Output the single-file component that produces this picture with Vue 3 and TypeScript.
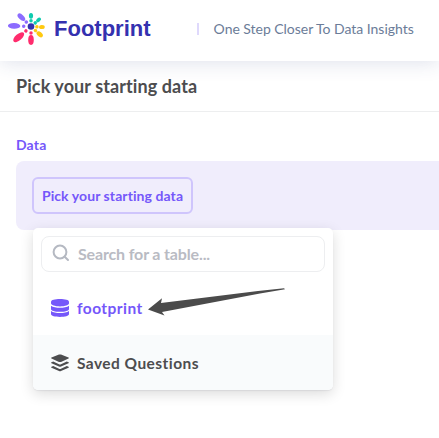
<script setup lang="ts">
interface Petal {
  angle: number
  color: string
  near: number
  far: number
  length: number
  width: number
}

interface Source {
  id: string
  label: string
  icon: 'database' | 'stack'
}

const petals: Petal[] = [
  { angle: -90, color: '#0fcbae', near: 5.8, far: 10.7, length: 2.9, width: 2.1 },
  { angle: -41, color: '#0fcbae', near: 5.6, far: 10, length: 2.8, width: 1.9 },
  { angle: 3, color: '#ffc910', near: 5.9, far: 10.9, length: 2.9, width: 2 },
  { angle: 42, color: '#ffc910', near: 6, far: 11.7, length: 3.7, width: 2.3 },
  { angle: 90, color: '#ff2c6d', near: 6.5, far: 13.5, length: 4.9, width: 2.8 },
  { angle: 139, color: '#ff2c6d', near: 6.8, far: 16.3, length: 6.7, width: 3.2 },
  { angle: 182, color: '#8c6cff', near: 7.3, far: 16.9, length: 6.2, width: 2.9 },
  { angle: 224, color: '#8c6cff', near: 6.5, far: 13.4, length: 4.7, width: 2.5 },
]

const sources: Source[] = [
  { id: 'footprint', label: 'footprint', icon: 'database' },
  { id: 'saved', label: 'Saved Questions', icon: 'stack' },
]
</script>

<template>
  <div class="page">
    <header class="header">
      <svg class="logo" viewBox="0 0 40 36" aria-hidden="true">
        <g transform="translate(23 15.500)">
          <circle r="3.300" fill="#3332ae" />
          <g v-for="p in petals" :key="p.angle" :fill="p.color" :transform="`rotate(${p.angle})`">
            <circle :cx="p.near" r="1.750" />
            <ellipse :cx="p.far" :rx="p.length" :ry="p.width" />
          </g>
        </g>
      </svg>
      <span class="brand">Footprint</span>
      <span class="divider"></span>
      <span class="tagline">One Step Closer To Data Insights</span>
    </header>
    <div class="heading"><h1>Pick your starting data</h1></div>
    <main class="content">
      <h2 class="label">Data</h2>
      <section class="step">
        <div class="picker">
          <button class="trigger" type="button">Pick your starting data</button>
          <div class="menu">
            <label class="search">
              <svg class="search-icon" viewBox="0 0 18 18" aria-hidden="true">
                <circle cx="8" cy="8" r="6.400" />
                <path d="m12.700 12.700 3.300 3.300" />
              </svg>
              <input type="text" placeholder="Search for a table..." />
            </label>
            <ul class="sources">
              <li v-for="s in sources" :key="s.id" class="source" :class="s.id">
                <svg v-if="s.icon === 'database'" class="icon" viewBox="0 0 18 18" aria-hidden="true">
                  <path d="M0 2.800C0 1 4 0 9 0s9 1 9 2.800v1.500C18 6.200 14 7.400 9 7.400S0 6.200 0 4.300Z" />
                  <path d="M0 6.700c2 1.500 5.300 2 9 2s7-.5 9-2v3.200c0 1.800-4 2.900-9 2.900S0 11.700 0 9.900Z" />
                  <path d="M0 12.100c2 1.500 5.300 2 9 2s7-.5 9-2v3c0 1.800-4 2.900-9 2.900s-9-1.100-9-2.900Z" />
                </svg>
                <svg v-else class="icon" viewBox="0 0 18 18" aria-hidden="true">
                  <path d="M8 .600Q9 .200 10 .600L17.500 3.600Q18.300 4 17.500 4.500L10 7.900Q9 8.300 8 7.900L.500 4.500Q-.300 4 .500 3.600Z" />
                  <path d="M.500 8.300 2.200 7.500 8 10.200Q9 10.600 10 10.200L15.800 7.500 17.500 8.300Q18.300 8.700 17.500 9.200L10 12.500Q9 12.900 8 12.500L.500 9.200Q-.300 8.700 .500 8.300Z" />
                  <path d="M.500 12.800 2.200 12 8 14.700Q9 15.100 10 14.700L15.800 12 17.500 12.800Q18.300 13.200 17.500 13.700L10 17Q9 17.400 8 17L.500 13.700Q-.300 13.200 .500 12.800Z" />
                </svg>
                <span>{{ s.label }}</span>
              </li>
            </ul>
          </div>
        </div>
      </section>
    </main>
    <svg class="pointer" viewBox="0 0 140 30" aria-hidden="true">
      <path d="M0 22.500 14 11.300 13 16 110 4 136 1.300 137 2.200 112 6.500 14 25 16.500 28.500Z" />
    </svg>
  </div>
</template>

<style>
body {
  background: #fff;
  overflow: hidden;
}
</style>

<style scoped>
.page {
  position: relative;
  height: 438px;
  overflow: hidden;
  font-family: Lato, sans-serif;
  font-variant-ligatures: none;
  color: #4d4d4f;
}
.header {
  position: relative;
  display: flex;
  align-items: center;
  box-sizing: border-box;
  height: 61px;
  padding: 0 0 4px 8px;
  background: #fff;
  box-shadow: 0 1px 20px rgba(45, 65, 130, 0.17);
}
.logo {
  width: 40px;
  height: 36px;
  margin-top: 1px;
}
.brand {
  width: 143px;
  margin-left: 6px;
  font: bold 22px/30px "Liberation Sans", sans-serif;
  color: #3431af;
}
.divider {
  width: 2px;
  height: 12px;
  margin-top: 1px;
  background: #dfd9fc;
}
.tagline {
  margin-left: 14.6px;
  font-size: 14px;
  line-height: 20px;
  letter-spacing: -0.03px;
  color: #6b7c98;
  white-space: nowrap;
}
.heading {
  display: flex;
  align-items: center;
  box-sizing: border-box;
  height: 51px;
  padding-left: 16px;
  border-bottom: 1px solid #edeeef;
}
h1 {
  margin: 0;
  font-size: 18px;
  line-height: 24px;
  letter-spacing: 0.09px;
}
.content {
  padding: 24px 0 0 16px;
}
.label {
  margin: 0 0 7px;
  font-size: 14px;
  line-height: 18px;
  letter-spacing: 0.15px;
  color: #7557fa;
}
.step {
  box-sizing: border-box;
  height: 69px;
  padding: 16px;
  border-radius: 8px 0 0 8px;
  background: #f0edfc;
}
.picker {
  position: relative;
  width: 301px;
}
.trigger {
  display: block;
  box-sizing: border-box;
  width: 161px;
  height: 37px;
  padding: 0;
  border: 2px solid #cfc5fc;
  border-radius: 6px;
  background: transparent;
  color: #7557fa;
  font: bold 14px/20px Lato, sans-serif;
  font-variant-ligatures: none;
  letter-spacing: 0.08px;
  white-space: nowrap;
}
.menu {
  position: absolute;
  top: 51px;
  left: 1px;
  width: 300px;
  box-sizing: border-box;
  padding-top: 8px;
  border-radius: 5px;
  background: #fff;
  box-shadow: 0 4px 14px rgba(0, 0, 0, 0.14), 0 1px 1px rgba(60, 70, 90, 0.08);
}
.search {
  display: flex;
  align-items: center;
  box-sizing: border-box;
  height: 36px;
  margin: 0 8px;
  padding-left: 11px;
  border: 1px solid #edeef0;
  border-radius: 8px;
}
.search-icon {
  width: 18px;
  height: 18px;
  margin: -2px 0 0 -1px;
  fill: none;
  stroke: #b5b9c2;
  stroke-width: 2;
  stroke-linecap: round;
}
.search input {
  width: 220px;
  margin-left: 8px;
  padding: 0;
  border: 0;
  outline: 0;
  background: transparent;
  font: bold 16px/20px Lato, sans-serif;
  letter-spacing: -0.15px;
}
.search input::placeholder {
  color: #b9bbc3;
  opacity: 1;
}
.sources {
  margin: 8px 0 0;
  padding: 0;
  list-style: none;
}
.source {
  display: flex;
  align-items: center;
  height: 55px;
  padding-left: 18px;
  gap: 8px;
  font-size: 15.5px;
  font-weight: bold;
  line-height: 20px;
  letter-spacing: 0.45px;
}
.footprint {
  color: #7557fa;
}
.saved {
  border-radius: 0 0 5px 5px;
  background: #f9fbfc;
}
.icon {
  width: 18px;
  height: 18px;
  fill: currentColor;
}
.pointer {
  position: absolute;
  top: 287px;
  left: 148px;
  width: 140px;
  height: 30px;
  fill: #4b4b4b;
}
</style>
